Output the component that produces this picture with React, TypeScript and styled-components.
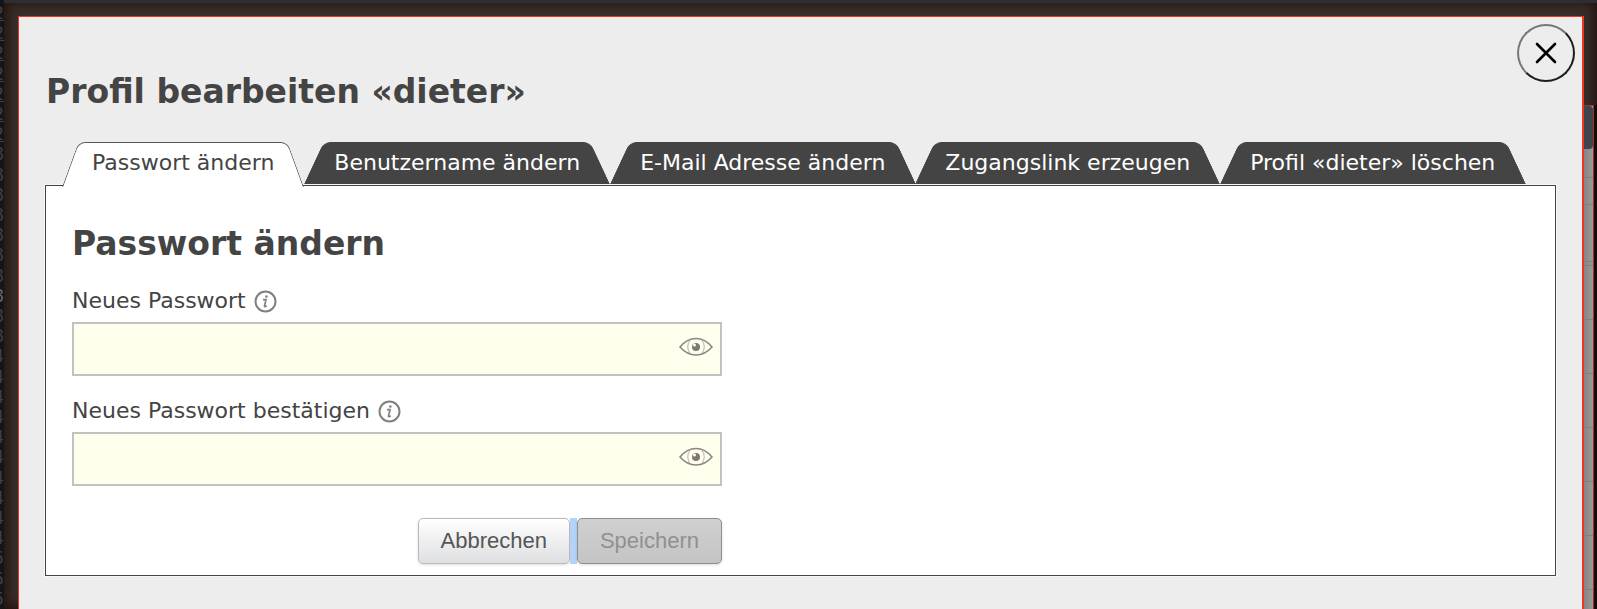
import React, { useState } from "react";
import styled, { createGlobalStyle } from "styled-components";

const Global = createGlobalStyle`
  * { box-sizing: border-box; }
  body { margin: 0; background: #17181a; font-family: Verdana, "DejaVu Sans", sans-serif; color: #444; }
  button, input { font: inherit; }
`;

const Screen = styled.div`
  display: grid;
  grid-template-columns: 4px minmax(0, 1fr);
  min-height: 100vh;
  overflow: hidden;
`;

const Gutter = styled.ol`
  display: flex;
  flex-direction: column;
  justify-content: space-between;
  align-items: flex-end;
  height: 100vh;
  margin: 0;
  padding: 3px 0 0;
  overflow: hidden;
  list-style: none;
  background: #141516;
  font: 17px/20px "DejaVu Sans", sans-serif;
`;

const LineNumber = styled.li<{ $underlined: boolean; $current: boolean }>`
  flex: none;
  height: 20px;
  color: ${(p) => (p.$current ? "#66686a" : "#3e4144")};
  text-decoration: ${(p) => (p.$underlined ? "underline" : "none")};
`;

const Backdrop = styled.div`
  display: grid;
  grid-template-columns: 14px minmax(0, 1fr) 10px 3px;
  grid-template-rows: 16px 1fr;
  background: #382e2b;
  box-shadow: inset 0 3px 0 #2b2f33, inset 0 0 12px 3px #22120c;
`;

const Dialog = styled.main`
  grid-column: 2;
  grid-row: 2;
  border: solid #ee3524;
  border-width: 1px 2px 0 1px;
  background: #ededed;
  padding: 7px 26px 32px 26px;
`;

const SidePage = styled.div`
  display: flex;
  flex-direction: column;
  grid-column: 3;
  grid-row: 2;
  height: calc(100vh - 105px);
  margin-top: 89px;
  overflow: hidden;
  border: solid #a52f2a;
  border-width: 1px 1px 0 0;
  background: linear-gradient(90deg, #858585, #999);
`;

const SideHeader = styled.div`
  flex: none;
  height: 43px;
  border-radius: 0 4px 4px 0;
  background: #3d444c;
`;

const SideRow = styled.div<{ $height: number }>`
  flex: none;
  height: ${(p) => p.$height}px;
  border-bottom: 1px solid #7f7f7f;
`;

const Edge = styled.div`
  grid-column: 4;
  grid-row: 2;
  margin-top: 89px;
  background: #150c09;
`;

const DialogHeader = styled.header`
  display: flex;
  justify-content: space-between;
  align-items: flex-start;
  margin-right: -19px;
`;

const Title = styled.h1`
  margin: 46px 0 0 1px;
  font: bold 33px/44px "DejaVu Sans", sans-serif;
`;

const CloseButton = styled.button`
  display: grid;
  place-items: center;
  width: 58px;
  height: 58px;
  padding: 0;
  border: 2px solid;
  border-color: #777 #1d1d1d #1d1d1d #777;
  border-radius: 50%;
  background: transparent;
  color: #000;
`;

const Tabs = styled.div`
  display: flex;
  margin: 28px 0 0 17px;
`;

const Tab = styled.button<{ $active: boolean }>`
  display: grid;
  grid-template-columns: 1fr 1fr;
  height: ${(p) => (p.$active ? 44 : 41)}px;
  margin-bottom: ${(p) => (p.$active ? -1 : 2)}px;
  padding: 0;
  border: 0;
  background: none;
  position: relative;
  z-index: 1;
  color: ${(p) => (p.$active ? "#444" : "#fff")};
  font: 22px/24px "DejaVu Sans", sans-serif;
  white-space: nowrap;
  cursor: pointer;

  &::before,
  &::after {
    content: "";
    grid-row: 1;
    height: 100%;
    background: ${(p) => (p.$active ? "#fff" : "#444")};
    border: solid ${(p) => (p.$active ? "#555" : "#444")};
  }
  &::before {
    grid-column: 1;
    margin-right: -2px;
    border-width: 1px 0 0 1px;
    border-radius: 7px 0 0 0;
    transform: skewX(${(p) => (p.$active ? -20 : -25)}deg);
    transform-origin: bottom;
  }
  &::after {
    grid-column: 2;
    border-width: 1px 1px 0 0;
    border-radius: 0 7px 0 0;
    transform: skewX(${(p) => (p.$active ? 20 : 25)}deg);
    transform-origin: bottom;
  }
`;

const TabLabel = styled.span`
  grid-column: 1 / -1;
  grid-row: 1;
  z-index: 1;
  padding: 9px 30px 0;
`;

const Panel = styled.section`
  padding: 36px 26px 11px;
  border: 1px solid #444;
  outline: 1px solid #ffffff88;
  background: #fff;
`;

const Heading = styled.h2`
  margin: 0;
  font: bold 33px/44px "DejaVu Sans", sans-serif;
`;

const Form = styled.form`
  width: 650px;
  max-width: 100%;
`;

const LabelRow = styled.div`
  display: flex;
  align-items: center;
  gap: 8px;
  height: 28px;
  margin: 21px 0 7px;
  font: 22px/28px "DejaVu Sans", sans-serif;
`;

const Field = styled.div`
  display: flex;
  align-items: center;
  height: 54px;
  padding: 0 7px 4px 0;
  border: 2px solid #c2c2bf;
  background: #ffffed;
`;

const Input = styled.input`
  flex: 1;
  min-width: 0;
  height: 100%;
  padding: 0 10px;
  border: 0;
  outline: 0;
  background: transparent;
`;

const IconButton = styled.button`
  display: grid;
  padding: 0;
  border: 0;
  background: none;
`;

const Actions = styled.div`
  display: flex;
  justify-content: flex-end;
  margin-top: 32px;
`;

const ActionButton = styled.button`
  height: 46px;
  padding: 0 22px;
  border: 1px solid #b9b9b9;
  border-radius: 5px;
  background: linear-gradient(#fff, #dedfe1);
  box-shadow: 0 1px 3px #0002;
  color: #555;
  font: 22px/24px "Liberation Sans", Arial, sans-serif;

  &:disabled {
    border-color: #8e8e8e;
    background: linear-gradient(#d0d0d0, #c4c4c4);
    color: #909090;
  }
`;

const Selection = styled.span`
  width: 7px;
  background: #b4d3f8;
`;

const InfoIcon = () => (
  <svg width="23" height="23" viewBox="0 0 23 23" fill="none" stroke="#808080" aria-hidden="true">
    <circle cx="11.5" cy="11.5" r="10" strokeWidth="2" />
    <path d="M9 9.600h3l-1.500 6.300q-.3 1.300 2.300.1" strokeWidth="1.700" />
    <circle cx="12.400" cy="6.500" r="1.300" fill="#808080" stroke="none" />
  </svg>
);

const EyeIcon = () => (
  <svg width="34" height="20" viewBox="0 0 34 20" fill="none" stroke="#8e8582" aria-hidden="true">
    <path d="M1 10Q8 1.500 17 1.500T33 10Q26 18 17 18T1 10Z" strokeWidth="1.500" />
    <path d="M11 3.200Q6.500 10 11 16.500M23 3.200Q27.500 10 23 16.500" stroke="#b9adab" />
    <circle cx="17" cy="10" r="4" fill="#7c7974" stroke="none" />
    <circle cx="15.500" cy="8" r="1.500" fill="#ffffed" stroke="none" />
  </svg>
);

const CloseIcon = () => (
  <svg width="22" height="22" viewBox="0 0 22 22" stroke="currentColor" strokeWidth="2.600" strokeLinecap="round" aria-hidden="true">
    <path d="M2 2l18 18M20 2L2 20" />
  </svg>
);

const tabs = [
  "Passwort ändern",
  "Benutzername ändern",
  "E-Mail Adresse ändern",
  "Zugangslink erzeugen",
  "Profil «dieter» löschen",
];

const lineEnds = "222222288888888884444444444555".split("");
const currentLine = 14;
const sideRows = [29, 27, 57, 4, 54, 54, 54, 54, 54, 54];

function PasswordField({ id, label }: { id: string; label: string }) {
  const [visible, setVisible] = useState(false);
  return (
    <>
      <LabelRow>
        <label htmlFor={id}>{label}</label>
        <IconButton type="button" aria-label={`Info: ${label}`}><InfoIcon /></IconButton>
      </LabelRow>
      <Field>
        <Input id={id} type={visible ? "text" : "password"} />
        <IconButton type="button" aria-label="Passwort anzeigen" onClick={() => setVisible(!visible)}>
          <EyeIcon />
        </IconButton>
      </Field>
    </>
  );
}

export default function App() {
  const [active, setActive] = useState(0);
  return (
    <>
      <Global />
      <Screen>
        <Gutter aria-hidden="true">
          {lineEnds.map((n, i) => (
            <LineNumber key={i} $underlined={i < 7} $current={i === currentLine}>{n}</LineNumber>
          ))}
        </Gutter>
        <Backdrop>
          <Dialog>
            <DialogHeader>
              <Title>Profil bearbeiten «dieter»</Title>
              <CloseButton type="button" aria-label="Schliessen"><CloseIcon /></CloseButton>
            </DialogHeader>
            <Tabs role="tablist">
              {tabs.map((label, i) => (
                <Tab key={label} type="button" role="tab" aria-selected={i === active} $active={i === active} onClick={() => setActive(i)}>
                  <TabLabel>{label}</TabLabel>
                </Tab>
              ))}
            </Tabs>
            <Panel role="tabpanel">
              <Heading>{tabs[active]}</Heading>
              <Form onSubmit={(e) => e.preventDefault()}>
                <PasswordField id="new-password" label="Neues Passwort" />
                <PasswordField id="confirm-password" label="Neues Passwort bestätigen" />
                <Actions>
                  <ActionButton type="button">Abbrechen</ActionButton>
                  <Selection />
                  <ActionButton type="submit" disabled>Speichern</ActionButton>
                </Actions>
              </Form>
            </Panel>
          </Dialog>
          <SidePage>
            <SideHeader />
            {sideRows.map((height, i) => <SideRow key={i} $height={height} />)}
          </SidePage>
          <Edge />
        </Backdrop>
      </Screen>
    </>
  );
}
